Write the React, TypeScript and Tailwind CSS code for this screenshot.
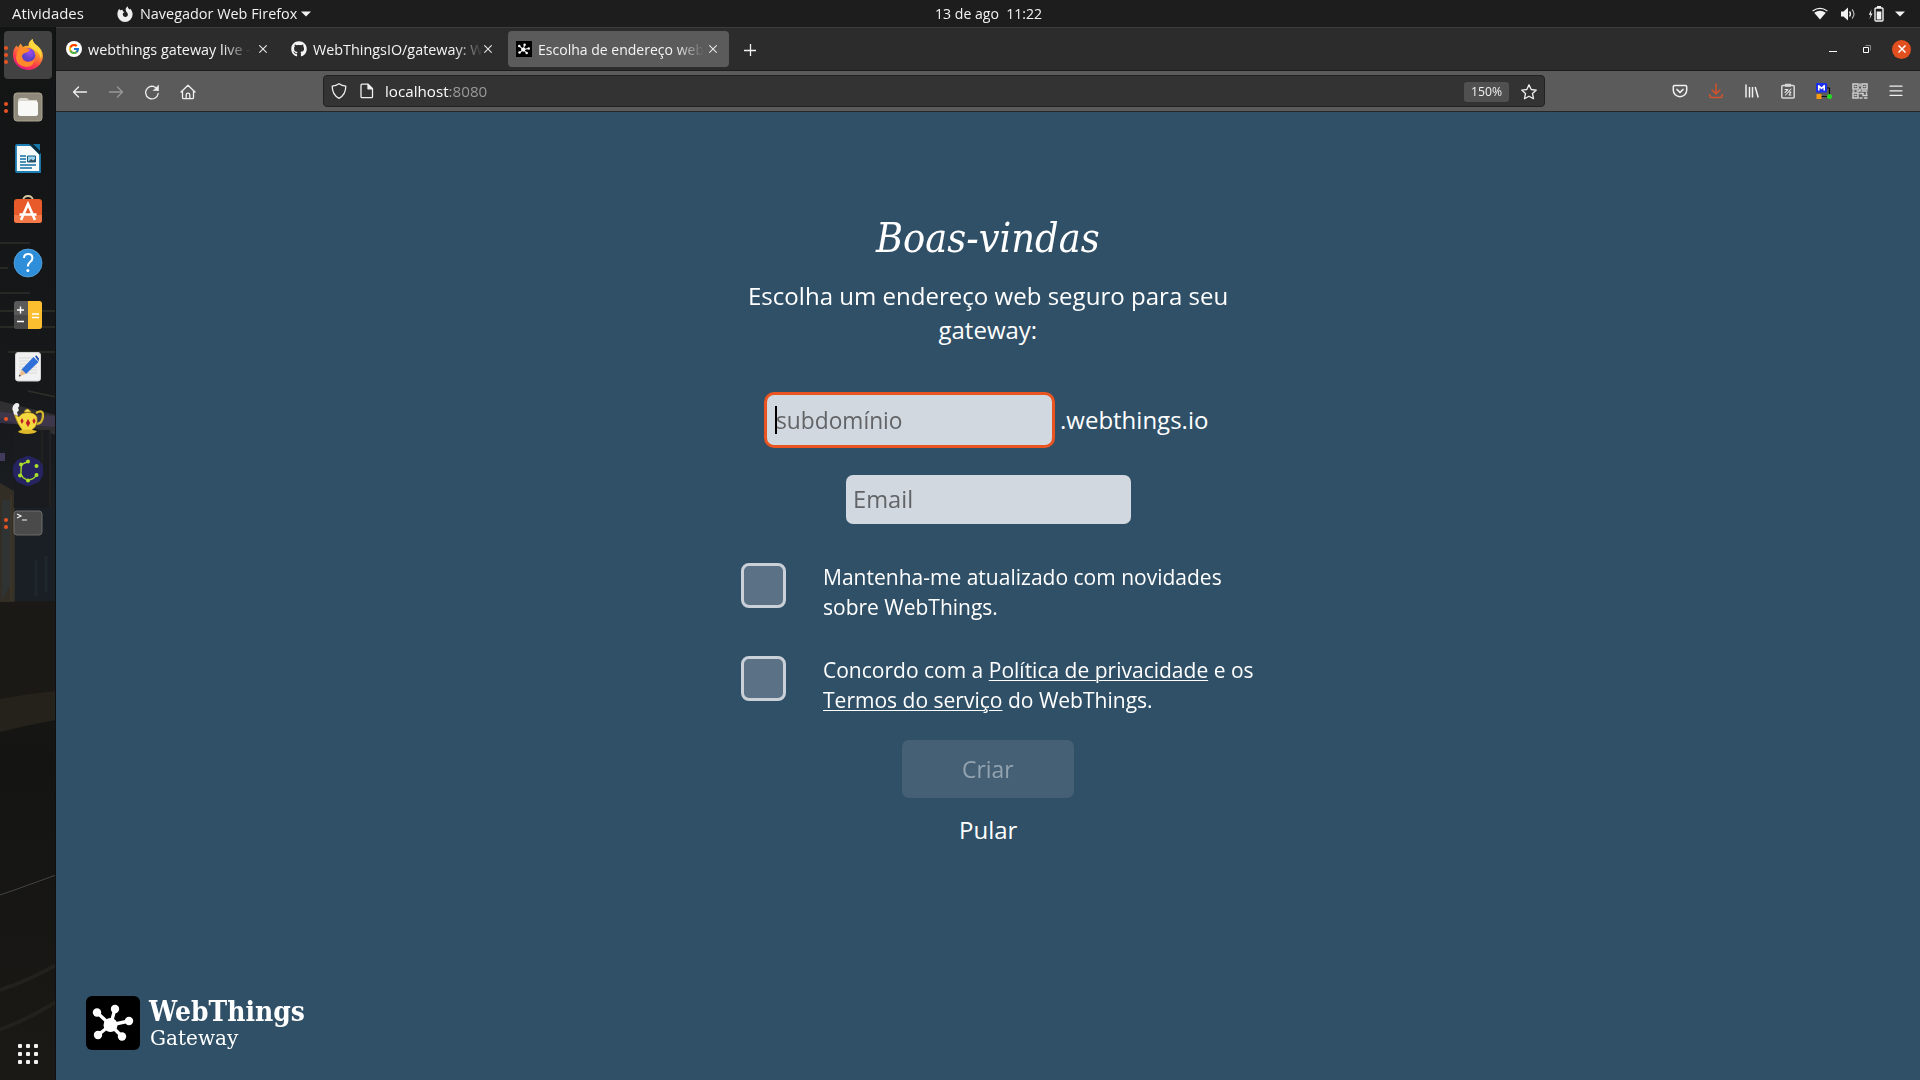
import { useLayoutEffect, useRef, useState } from "react";
import type { ReactNode } from "react";
import { FaGithub } from "react-icons/fa";
import { FcGoogle } from "react-icons/fc";

/* Inline text stretched horizontally so that it occupies exactly `w` pixels. */
function Fit({ w, children, className = "" }: { w: number; children: ReactNode; className?: string }) {
  const ref = useRef<HTMLSpanElement>(null);
  const [k, setK] = useState(1);
  useLayoutEffect(() => {
    if (ref.current) setK(w / ref.current.offsetWidth);
  }, [w]);
  return (
    <span className={"block shrink-0 whitespace-nowrap " + className} style={{ width: w }}>
      <span ref={ref} className="inline-block origin-left" style={{ transform: `scaleX(${k})` }}>
        {children}
      </span>
    </span>
  );
}

const Caret = () => (
  <svg width="10" height="6" viewBox="0 0 10 6"><path d="M0 .5h10L5 5.5z" fill="#f2f2f2" /></svg>
);

function WebThingsMark({ size, radius }: { size: number; radius: number }) {
  const nodes = [[11, 16.5], [29, 13], [43, 25], [36, 40.5], [12, 39]];
  return (
    <svg width={size} height={size} viewBox="0 0 54 54" className="shrink-0">
      <rect width="54" height="54" rx={radius} fill="#000" />
      {nodes.map(([x, y]) => (
        <g key={x}>
          <path d={`M24.5 29L${x} ${y}`} stroke="#fff" strokeWidth="3.4" />
          <circle cx={x} cy={y} r="4.2" fill="#fff" />
        </g>
      ))}
      <circle cx="24.5" cy="29" r="7" fill="#fff" />
    </svg>
  );
}

function TopBar() {
  return (
    <header className="flex h-[27px] shrink-0 items-center bg-[#1d1d1d] text-[13.7px] text-[#f2f2f2]">
      <Fit w={72} className="ml-3 pt-px">Atividades</Fit>
      <svg width="16" height="16" viewBox="0 0 16 16" className="ml-[33px] mr-[7px] shrink-0">
        <path d="M8 16A7.6 7.6 0 0 1 .4 8.500C.4 6 1 4.200 2.300 2.800L3 4.300 5.500 3.800 6 5.500 7.500 6 5.800 7.500C5.500 10 7 11 8.300 11 10.200 11 11.100 9.500 10.800 8 10.500 6.500 9 6 8.700 4 8.500 2.300 9.500 1 10.700.2 10.700 2 12 2.600 12.700 3.500L13.300 2.800C14.800 4.400 15.600 6.300 15.600 8.500A7.600 7.500 0 0 1 8 16z" fill="#ededed" />
      </svg>
      <Fit w={157} className="pt-px">Navegador Web Firefox</Fit>
      <div className="ml-[4px]"><Caret /></div>
      <Fit w={107} className="ml-[624px] pt-px">13 de ago&nbsp; 11:22</Fit>
      <div className="ml-auto mr-[15px] flex items-center">
        <svg width="16" height="13" viewBox="0 0 16 13" className="mr-3">
          <path d="M.6 4Q8-1.200 15.400 4" fill="none" stroke="#f2f2f2" strokeWidth="1.200" />
          <path d="M2.200 5.800Q8 1.800 13.800 5.800L8 12.600z" fill="#f2f2f2" />
        </svg>
        <svg width="16" height="14" viewBox="0 0 16 14" className="mr-[12px]">
          <path d="M1 4.500h2.500L8 .5v13l-4.500-4H1z" fill="#f2f2f2" />
          <path d="M9.500 4.500q2 2.500 0 5" stroke="#f2f2f2" strokeWidth="1.300" fill="none" />
          <path d="M12 2.500q4 4.500 0 9" stroke="#b5b5b5" strokeWidth="1.200" fill="none" />
        </svg>
        <svg width="16" height="16" viewBox="0 0 16 16" className="mr-[11px]">
          <path d="M3.500 3.500L.8 8.800h1.800L1.500 13l3-5.600H2.800z" fill="#f2f2f2" />
          <path d="M9 0h4v2H9z" fill="#f2f2f2" />
          <rect x="7" y="2" width="8" height="13" rx="1" fill="none" stroke="#f2f2f2" strokeWidth="1.400" />
          <path d="M8.700 5.500h4.600v8H8.700z" fill="#f2f2f2" />
        </svg>
        <Caret />
      </div>
    </header>
  );
}

function DockWallpaper() {
  return (
    <svg width="56" height="1053" viewBox="0 27 56 1053" className="absolute inset-0">
      <defs>
        <linearGradient id="dk" x1="0" y1="0" x2="0" y2="1">
          <stop offset="0" stopColor="#131414" /><stop offset=".35" stopColor="#16181a" />
          <stop offset=".5" stopColor="#1c2025" /><stop offset=".56" stopColor="#191815" />
          <stop offset=".7" stopColor="#141413" /><stop offset="1" stopColor="#1a1915" />
        </linearGradient>
      </defs>
      <rect y="27" width="56" height="1053" fill="url(#dk)" />
      <g stroke="#4a463a" strokeWidth="1.300" opacity=".5">
        <path d="M0 243h30M0 268h8M0 293h30M0 311h56M0 327h56M8 352h48M28 391l28 6" />
      </g>
      <path d="M0 401l56 14v20L0 418z" fill="#302f31" />
      <path d="M0 412l56 4v11L0 423z" fill="#443b57" opacity=".7" />
      <path d="M0 453h5v8H0z" fill="#403a5c" />
      <path d="M14 430h36v80H14z" fill="#191b1f" />
      <path d="M50 430v78M42 428v48" stroke="#2b2925" />
      <path d="M0 483l14 8v112l-14-1z" fill="#322e25" />
      <path d="M2 500h8v85l-8 16z" fill="#2f363b" opacity=".7" />
      <path d="M14 508h42v93H14z" fill="#191f25" />
      <path d="M14 508v93M11 495v106" stroke="#443c2d" />
      <path d="M36 560v36M46 556v36" stroke="#1f262c" strokeWidth="3" />
      <path d="M0 602h56v90L0 700z" fill="#1a1916" />
      <path d="M0 699l30-5 26-3v29l-26 5-30 7z" fill="#25221b" />
      <path d="M0 895l20-7 36-13" stroke="#444442" fill="none" />
      <path d="M0 990q30-10 56-25M0 1030q30-12 56-28" stroke="#22211c" strokeWidth="4" fill="none" />
      <path d="M55.500 27v1053" stroke="#0f1011" />
    </svg>
  );
}

const dockIcons: { dots: number; active?: boolean; art: ReactNode }[] = [
  { dots: 3, active: true, art: (
    <>
      <defs>
        <linearGradient id="fx" x1=".8" y1="0" x2=".3" y2="1">
          <stop offset="0" stopColor="#fff44f" /><stop offset=".35" stopColor="#ffa02c" />
          <stop offset=".7" stopColor="#ff4047" /><stop offset="1" stopColor="#e31587" />
        </linearGradient>
        <radialGradient id="fxp" cx=".6" cy=".3"><stop offset="0" stopColor="#a04bf0" /><stop offset="1" stopColor="#5a43c8" /></radialGradient>
      </defs>
      <path d="M16 31A15 15 0 0 1 1 16Q1 10 4.500 6.500L6 8.500 8.500 4.500 11 8Q14 6 16.500 7 16 3 20.500 0 21 4 25 6.500 31 11 31 17A15 14.500 0 0 1 16 31z" fill="url(#fx)" />
      <circle cx="16.500" cy="16" r="6.800" fill="url(#fxp)" />
      <path d="M5 13q4-5 8-4 3 0 5 2-2 2.500-5 3-3 .5-3 4 .5 4 5 5 6 0 8-4-1 9-9 9-9-1-10-9z" fill="#ff8a2a" />
      <path d="M17 7q.5-4 3.500-7 .5 4 4.500 6.500 6 5 4 14-1-7-6-9-3-2-6-4.500z" fill="#ffd83d" />
    </>
  ) },
  { dots: 2, art: (
    <>
      <rect x="2" y="2" width="28" height="28" rx="3" fill="#8f897b" stroke="#aaa491" />
      <path d="M6 10q0-3 3-3h5q2 0 3 2h8v6H6z" fill="#d9d6cd" />
      <rect x="6" y="10" width="20" height="15" rx="2.500" fill="#f8f8f6" />
    </>
  ) },
  { dots: 0, art: (
    <>
      <path d="M5 2h14l9 9v18H5q-1 0-1-1V3q0-1 1-1z" fill="#f8fbfc" stroke="#1e7fb4" strokeWidth="1.800" />
      <path d="M17 1l11 11V9L20 1z" fill="#0c2b3a" /><path d="M21 1h7v7z" fill="#1475a8" />
      <path d="M8 13h6M8 16h6M8 19h6M8 22h16M8 25h12" stroke="#0f6fa3" strokeWidth="1.300" />
      <path d="M15.500 13h8v6h-8z" fill="#9dd2ee" stroke="#14597f" /><path d="M16 19l3-3 2 1.500L23 16v3z" fill="#31515f" />
    </>
  ) },
  { dots: 0, art: (
    <>
      <path d="M11 5q1-4 5-4t5 4" stroke="#d8c9a1" strokeWidth="1.800" fill="none" />
      <rect x="2" y="4" width="28" height="24" rx="3" fill="#e95a2b" /><path d="M2 20h28v5q0 3-3 3H5q-3 0-3-3z" fill="#f47948" />
      <path d="M9 25l7-16 7 16M7.500 19.500h17" stroke="#fff" strokeWidth="2.600" fill="none" />
    </>
  ) },
  { dots: 0, art: (
    <>
      <circle cx="16" cy="16" r="14" fill="#2e8ed9" stroke="#64b0e8" strokeWidth=".7" />
      <path d="M12 11q0-4 4.200-4t4.200 4q0 2.500-2.500 4.200-2 1.500-2 4.300" stroke="#fff" strokeWidth="2" fill="none" />
      <circle cx="15.900" cy="23.500" r="1.500" fill="#fff" />
    </>
  ) },
  { dots: 0, art: (
    <>
      <rect x="2" y="2" width="28" height="28" rx="3" fill="#5a5a5a" /><path d="M2 16h14v14H5q-3 0-3-3z" fill="#484848" />
      <path d="M16 2h11q3 0 3 3v22q0 3-3 3H16z" fill="#fbbe2e" />
      <path d="M5 11h7M8.500 7.500v7M5 22.500h7M20 15h7M20 18.500h7" stroke="#fff" strokeWidth="1.400" />
    </>
  ) },
  { dots: 0, art: (
    <>
      <rect x="3.500" y="1.500" width="25" height="28.500" rx="2.500" fill="#f1f1f1" stroke="#d2d2d2" />
      <path d="M7 7h18M7 10h18M7 13h18M7 16h18M7 19h18M7 22h18" stroke="#d9d9d9" />
      <path d="M9.500 18.500L21.500 6l5 5L14 23z" fill="#2f6fd8" /><path d="M23 5l1.500-.5 2.500 3-.5 3z" fill="#1a4aa5" />
      <path d="M9.500 18.500L14 23l-7 2.500z" fill="#e8bd90" /><path d="M7.300 23.500L7 25.500l2-.6z" fill="#333" />
    </>
  ) },
  { dots: 1, art: (
    <>
      <path d="M2 1.500Q5-1 7 1q1 2-1 4 2 3-1 4 1 3 .5 4.500Q1 12 1.500 9-1 5 2 1.500z" fill="#efefef" />
      <path d="M24 10q7-4 7 2 0 8-6 9" stroke="#d7b928" strokeWidth="2.200" fill="none" />
      <path d="M3 12l4 2q2-4 8-4.500 8 0 10 5 1 9-5 12l3 3H7l3-3Q6 22 2.500 12z" fill="#f4d940" stroke="#a98a17" strokeWidth=".7" />
      <path d="M12 9q3-6 7 0z" fill="#f7e25a" stroke="#a98a17" strokeWidth=".7" /><path d="M6 28q10-3 19 0-2 3-10 3-7 0-9-3z" fill="#ddb82a" />
      <path d="M10 15l1.600 3-1.600 3-1.600-3zM16 16l2.200 4-2.200 4-2.200-4zM22 15l1.600 3-1.600 3-1.600-3z" fill="#bc1f25" />
    </>
  ) },
  { dots: 0, art: (
    <>
      <path d="M16 0.500l11 4.500 4 6v9l-4 7-11 4.500L5 27l-4-7v-9l4-6z" fill="#262361" />
      <path d="M16 6.500l-6.500 3L9 15v4l2 3.500 5 3 5-1.800 3.500-3.200" stroke="#a3d929" strokeWidth="1.400" fill="none" />
      {[[16, 6.500], [9, 9.500], [8, 20.500], [16, 25.500], [24.500, 20], [24.500, 11]].map(([x, y]) => <circle key={x + "-" + y} cx={x} cy={y} r="2" fill="#a8e02a" />)}
    </>
  ) },
  { dots: 2, art: (
    <>
      <rect x="2" y="4" width="28" height="24" rx="3" fill="#4a4a4a" stroke="#6c6c6c" />
      <path d="M5 7l4 2-4 2M10 13h5" stroke="#f3f3f3" strokeWidth="1.200" fill="none" />
    </>
  ) },
];

function Dock() {
  return (
    <aside className="relative flex w-14 shrink-0 flex-col bg-[#141414]">
      <DockWallpaper />
      <div className="relative flex h-full flex-col pt-[2px]">
        {dockIcons.map((it, i) => (
          <div key={i} className="flex h-[52px] items-center">
            <div className={it.active ? "ml-1 flex size-12 items-center rounded bg-[#424242]" : "ml-1 flex size-12 items-center"}>
              <div className="flex w-1 flex-col items-center gap-[3px]">
                {Array.from({ length: it.dots }, (_, d) => (
                  <span key={d} className="size-1 rounded-full bg-[#e95420]" />
                ))}
              </div>
              <svg width="32" height="32" viewBox="0 0 32 32" className="ml-1">{it.art}</svg>
            </div>
          </div>
        ))}
        <div className="mb-4 ml-[18px] mt-auto grid w-5 grid-cols-3 gap-1">
          {Array.from({ length: 9 }, (_, i) => <span key={i} className="size-1 rounded-[1px] bg-[#f2f2f2]" />)}
        </div>
      </div>
    </aside>
  );
}

const Cross = () => (
  <svg width="8" height="8" viewBox="0 0 8 8" className="shrink-0"><path d="M.3.3l7.400 7.400M7.700.3L.3 7.700" stroke="#e6e6e6" strokeWidth="1.100" /></svg>
);

function Tab({ icon, label, w, active }: { icon: ReactNode; label: string; w: number; active?: boolean }) {
  return (
    <div className={"flex h-9 w-[221px] items-center rounded pl-2 " + (active ? "bg-[#5b5b5b]" : "")}>
      <div className="flex size-4 shrink-0 items-center justify-center">{icon}</div>
      <div className="ml-[5.5px] pt-[2px] [mask-image:linear-gradient(to_right,#000_calc(100%-28px),transparent)]">
        <Fit w={w}>{label}</Fit>
      </div>
      <div className="ml-auto mr-3"><Cross /></div>
    </div>
  );
}

function TabStrip() {
  return (
    <div className="flex h-[44px] shrink-0 items-center border-b border-t border-b-[#1c1c1c] border-t-[#3d3d3d] bg-[#2c2c2c] pl-[2px] text-[13.7px] text-[#f4f4f4]">
      <div className="flex gap-1">
        <Tab icon={<span className="flex size-4 items-center justify-center rounded-full bg-white"><FcGoogle size={12} /></span>} label="webthings gateway live -" w={163} />
        <Tab icon={<FaGithub size={16} color="#f5f5f5" />} label="WebThingsIO/gateway: W" w={170} />
        <Tab icon={<WebThingsMark size={16} radius={0} />} label="Escolha de endereço web" w={166} active />
      </div>
      <svg width="12" height="12" viewBox="0 0 12 12" className="ml-[15px] mt-px"><path d="M6.500 0v12M0 6.500h12" stroke="#f2f2f2" strokeWidth="1.300" /></svg>
      <div className="ml-auto mr-[9px] flex items-center">
        <span className="mr-[26px] mt-1 h-px w-2 bg-white" />
        <svg width="8" height="8" viewBox="0 0 8 8" className="mr-[21px]">
          <path d="M2.500.5h5v5" stroke="#8a8a8a" fill="none" /><path d="M.5 2.500h5v5h-5z" stroke="#fff" fill="none" />
        </svg>
        <span className="flex size-[19px] items-center justify-center rounded-full bg-[#e2501f]">
          <svg width="8" height="8" viewBox="0 0 8 8"><path d="M.5.5l7 7M7.500.5l-7 7" stroke="#fff" strokeWidth="1.500" /></svg>
        </span>
      </div>
    </div>
  );
}

function Ico({ children, className = "" }: { children: ReactNode; className?: string }) {
  return (
    <svg width="16" height="16" viewBox="0 0 16 16" fill="none" stroke="#f0f0f0" strokeWidth="1.300" strokeLinecap="round" strokeLinejoin="round" className={"shrink-0 " + className}>
      {children}
    </svg>
  );
}

function Toolbar() {
  return (
    <div className="flex h-[41px] shrink-0 items-center border-b border-[#262626] bg-[#5b5b5b]">
      <div className="ml-4 mt-px flex gap-5">
        <Ico><path d="M1.500 8h13M6.500 3l-5 5 5 5" /></Ico>
        <Ico className="opacity-40"><path d="M1.500 8h13M9.500 3l5 5-5 5" /></Ico>
        <Ico><path d="M13.800 6.200A6.300 6.300 0 1 0 14.200 9.500" /><path d="M14.500 1.500v5h-5z" fill="#f0f0f0" strokeWidth=".6" /></Ico>
        <Ico><path d="M1 8l7-6.800L15 8M2.500 7v6.500q0 1.200 1.200 1.200h8.600q1.200 0 1.200-1.200V7M6.200 14.500V11q0-1.800 1.800-1.800T9.800 11v3.500" /></Ico>
      </div>
      <div className="ml-[127px] flex h-8 w-[1222px] items-center rounded border border-[#222] bg-[#333] text-[13.700px]">
        <Ico className="ml-[7px]"><path d="M8 .7q3 2 6.800 2.400 0 8.900-6.800 12.200Q1.200 12 1.200 3.100 5 2.700 8 .7z" /></Ico>
        <Ico className="ml-3"><path d="M3 1.200h6l4.500 4.500v8q0 1-1 1H3q-1 0-1-1V2.200q0-1 1-1z" /><path d="M9 1.500v4.300h4.300z" fill="#f0f0f0" /></Ico>
        <Fit w={102} className="ml-[10px] pt-[2px] text-[#fafafa]">localhost<span className="text-[#999]">:8080</span></Fit>
        <div className="ml-auto mt-px flex h-5 w-[45px] items-center justify-center rounded-[3px] bg-[#505050] text-[13px] text-[#f0f0f0]">
          <Fit w={31}>150%</Fit>
        </div>
        <Ico className="ml-3 mr-[7px] mt-px"><path d="M8 .8l2.200 4.700 5.100.6-3.800 3.500 1 5.100L8 12.200l-4.500 2.500 1-5.100L.7 6.100l5.100-.6z" /></Ico>
      </div>
      <div className="ml-auto mr-4 flex gap-5">
        <Ico><path d="M2.500 2.500h11q1.200 0 1.200 1.200v3.500a6.700 6.500 0 0 1-13.400 0V3.700q0-1.200 1.200-1.200z" strokeWidth="1.500" /><path d="M5 6.500l3 3 3-3" strokeWidth="1.700" /></Ico>
        <Ico><g stroke="#d4532a" strokeWidth="1.500"><path d="M8 1v9.500M4 7l4 4 4-4M1.800 11.500v1.500q0 1.500 1.500 1.500h9.400q1.500 0 1.500-1.500v-1.500" /></g></Ico>
        <Ico><path d="M2 1.500v13M5.500 4v10.500M8.500 4v10.500M11.200 4l3 10.500" strokeLinecap="butt" strokeWidth="1.500" /></Ico>
        <Ico>
          <rect x="1.800" y="2.500" width="12.400" height="12.500" rx="1" stroke="#d8d8d8" strokeWidth="1.500" />
          <path d="M5.500 1.500h5v1.500h-5z" fill="#d8d8d8" stroke="#d8d8d8" />
          <path d="M5 6.500h3l-3 3M11 6l-5.500 6M9 9h2l-2 3h2" stroke="#e2e2e2" strokeWidth="1.100" />
        </Ico>
        <Ico>
          <path d="M10 5h3.500v7M5 13.500h8" stroke="#111" strokeWidth="1.200" />
          <rect x="0" y="0" width="11" height="9.500" rx="1" fill="#1c2ef0" stroke="none" />
          <path d="M2.800 7V2.700L5.500 5.500 8.200 2.700V7" stroke="#fff" strokeWidth="1.600" />
          <rect x="0.500" y="11" width="5" height="5" fill="#f59a14" stroke="none" /><circle cx="13.500" cy="13.500" r="2.500" fill="#22dc22" stroke="none" />
        </Ico>
        <Ico>
          <g stroke="#cfcfcf" strokeWidth="1.500" strokeLinejoin="miter"><path d="M1 1h5v5H1zM10 1h5v5h-5zM1 10h5v5H1z" /><path d="M3 3.500h1M12 3.500h1M3 12.500h1M8 1v2M8 6v2H5M1 8h1M10 8h5M8 10.500h3v2h4M8 15h2M12.500 15h2.500M14.500 10v1" /></g>
        </Ico>
        <Ico><path d="M2 3.200h12M2 7.800h12M2 12.300h12" /></Ico>
      </div>
    </div>
  );
}

function Check({ children, className = "" }: { children: ReactNode; className?: string }) {
  return (
    <div className={"flex w-[494px] text-[21.600px] leading-[30px] " + className}>
      <span className="mr-[37px] mt-px size-[45px] shrink-0 rounded-[8px] border-[3px] border-[#c9d0d7] bg-[#5a7186]" />
      <div>{children}</div>
    </div>
  );
}

function Setup() {
  return (
    <main className="flex flex-1 flex-col items-center bg-[#305067] text-2xl leading-[34px] text-white">
      <h1 className="mt-[102px] font-['DejaVu_Serif'] text-[41px] font-light italic leading-[48px]"><Fit w={224}>Boas-vindas</Fit></h1>
      <div className="mt-[17px] flex flex-col items-center">
        <Fit w={480}>Escolha um endereço web seguro para seu</Fit>
        <Fit w={99}>gateway:</Fit>
      </div>
      <div className="mt-[45px] flex w-[448px] items-center">
        <div className="flex h-14 w-[291px] items-center rounded-[10px] border-[3px] border-[#e95420] bg-[#d2d8df] pl-[8px] text-[23.300px] text-[#626467]">
          <span className="-mr-px h-7 w-[2px] bg-black" />
          <Fit w={127}>subdomínio</Fit>
        </div>
        <Fit w={148} className="ml-[5px]">.webthings.io</Fit>
      </div>
      <div className="mt-[27px] flex h-[49px] w-[285px] items-center rounded-[7px] bg-[#d2d8df] pb-[2px] pl-[7px] text-[23.300px] text-[#626467]">
        <Fit w={60}>Email</Fit>
      </div>
      <Check className="mt-[38px]">
        <Fit w={399}>Mantenha-me atualizado com novidades</Fit>
        <Fit w={175}>sobre WebThings.</Fit>
      </Check>
      <Check className="mt-[33px]">
        <Fit w={431}>Concordo com a <u className="underline decoration-1 underline-offset-[2px]">Política de privacidade</u> e os</Fit>
        <Fit w={330}><u className="underline decoration-1 underline-offset-[2px]">Termos do serviço</u> do WebThings.</Fit>
      </Check>
      <div className="mt-[25px] flex h-[58px] w-[172px] items-center justify-center rounded-[7px] bg-[#456074] text-[23.300px] text-[#93a3b0]">
        <Fit w={52}>Criar</Fit>
      </div>
      <div className="mt-[15px]"><Fit w={58}>Pular</Fit></div>
      <div className="mb-[30px] ml-[30px] mt-auto flex self-start">
        <WebThingsMark size={54} radius={6} />
        <div className="ml-[9px] font-['DejaVu_Serif']">
          <Fit w={156} className="text-[27px] font-bold leading-[32px]">WebThings</Fit>
          <Fit w={88} className="ml-[1px] text-[20.500px] leading-[20px]">Gateway</Fit>
        </div>
      </div>
    </main>
  );
}

export default function App() {
  return (
    <div className="flex h-[1080px] w-[1920px] flex-col overflow-hidden font-['Open_Sans','Noto_Sans',sans-serif]">
      <TopBar />
      <div className="flex min-h-0 flex-1">
        <Dock />
        <div className="flex min-w-0 flex-1 flex-col">
          <TabStrip />
          <Toolbar />
          <Setup />
        </div>
      </div>
    </div>
  );
}
